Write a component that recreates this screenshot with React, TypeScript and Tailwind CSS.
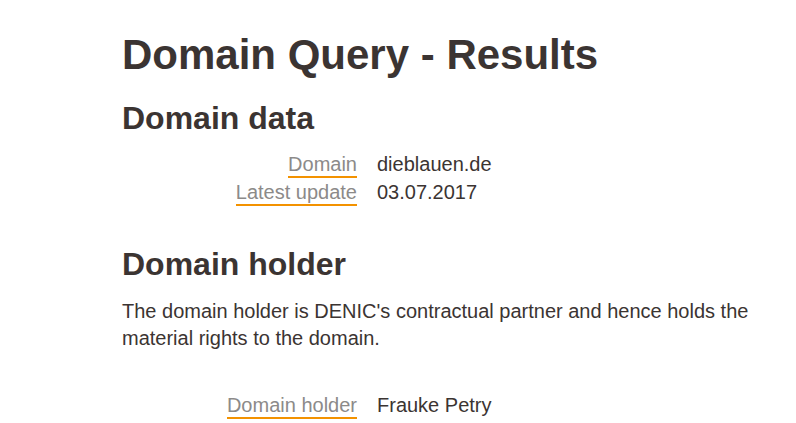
export default function App() {
  const rowsData = [
    { label: 'Domain', value: 'dieblauen.de' },
    { label: 'Latest update', value: '03.07.2017' },
  ]
  return (
    <div className="min-h-[423px] bg-white text-[#3b3432] [font-family:'Liberation_Sans',Arial,sans-serif] pl-[122px] pr-10 pt-[31px]">
      <h1 className="text-[42px] font-bold leading-[48px]">Domain Query - Results</h1>

      <h2 className="mt-[21px] text-[32px] font-bold leading-[36px]">Domain data</h2>
      <dl className="mt-[14px] grid grid-cols-[235px_auto] gap-x-5 text-[20px] leading-[28px]">
        {rowsData.map((row) => (
          <div key={row.label} className="contents">
            <dt className="text-right">
              <span className="text-[#8c8a89] border-b-2 border-[#f39200] pb-[1px]">{row.label}</span>
            </dt>
            <dd>{row.value}</dd>
          </div>
        ))}
      </dl>

      <h2 className="mt-[40px] text-[32px] font-bold leading-[36px]">Domain holder</h2>
      <p className="mt-[16px] text-[20px] leading-[27px] max-w-[640px]">
        The domain holder is DENIC's contractual partner and hence holds the material rights to the domain.
      </p>
      <dl className="mt-[39px] grid grid-cols-[235px_auto] gap-x-5 text-[20px] leading-[28px]">
        <dt className="text-right">
          <span className="text-[#8c8a89] border-b-2 border-[#f39200] pb-[1px]">Domain holder</span>
        </dt>
        <dd>Frauke Petry</dd>
      </dl>
    </div>
  )
}
